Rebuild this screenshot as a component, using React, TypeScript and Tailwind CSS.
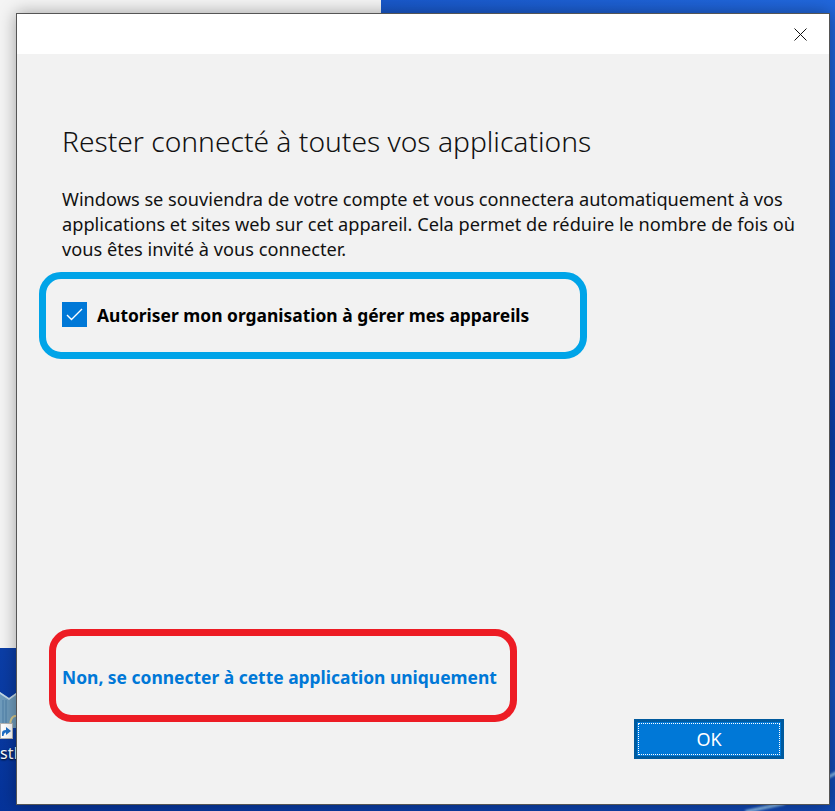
export default function App() {
  return (
    <div className="relative h-[811px] w-[835px] overflow-hidden bg-[linear-gradient(200deg,#2167dc_0%,#0b3ea8_40%,#1550bc_62%,#05339a_100%)] font-['Noto_Sans',sans-serif]">
      {/* window behind the dialog */}
      <div className="absolute left-0 top-0 h-[648px] w-[381px] bg-[#f4f4f4]" />

      {/* wallpaper streaks, bottom right */}
      <div className="absolute left-[822px] top-[772px] h-[3px] w-[26px] -rotate-[28deg] bg-[#8fc0ec] blur-[1px]" />
      <div className="absolute left-[745px] top-[806px] h-[3px] w-[40px] -rotate-[12deg] bg-[#8fc0ec] blur-[1px]" />

      {/* desktop icon, cut off by the dialog */}
      <svg className="absolute left-0 top-[690px]" width="16" height="50" viewBox="0 0 16 50">
        <path d="M0 2 L9 8 L16 3 V38 H0 Z" fill="#6f9cbd" />
        <path d="M0 2 L9 8 L16 3 V5 L9 10 L0 4 Z" fill="#c4d8e6" />
        <path d="M3 10 V38 M6 10 V38" stroke="#4f7ea6" strokeWidth="1" />
        <path d="M11 36 A5 7 0 0 1 16 26" fill="none" stroke="#d8c98a" strokeWidth="2" />
      </svg>
      <div className="absolute left-0 top-[723px] flex h-[16px] w-[13px] items-center justify-center border border-[#b5b5b5] bg-white">
        <svg width="11" height="11" viewBox="0 0 11 11">
          <path d="M1 10 L1 7 Q1 4 5 4 L5 1 L10 5 L5 9 L5 6.500 Q3 6.500 2.500 10 Z" fill="#1f6fc8" />
        </svg>
      </div>
      <div className="absolute left-0 top-[742px] text-[16px] leading-[22px] text-white [text-shadow:0_1px_2px_#000]">
        stF
      </div>

      {/* dialog */}
      <div className="absolute left-[16px] top-[13px] flex h-[792px] w-[814px] flex-col border border-[#555] bg-[#f2f2f2] shadow-[0_0_16px_rgba(0,0,0,0.35)]">
        <div className="flex h-[40px] shrink-0 items-center justify-end bg-white pr-[22px]">
          <svg width="13" height="13" viewBox="0 0 13 13" fill="none" stroke="#111" strokeWidth="1">
            <path d="M0.500 0.500 L12.500 12.500 M12.500 0.500 L0.500 12.500" />
          </svg>
        </div>

        <div className="flex grow flex-col pl-[45px]">
          <h1 className="mt-[67px] text-[28.2px] font-light leading-[40px] text-[#111]">
            Rester connecté à toutes vos applications
          </h1>
          <p className="mt-[26px] w-[745px] text-[18.2px] leading-[25px] text-[#111]">
            Windows se souviendra de votre compte et vous connectera automatiquement à vos applications et sites web sur
            cet appareil. Cela permet de réduire le nombre de fois où vous êtes invité à vous connecter.
          </p>

          <div className="-ml-[23px] mt-[10px] flex h-[87px] w-[548px] items-center gap-[10px] rounded-[22px] border-[7px] border-[#00a4e8] pb-[2px] pl-[16px]">
            <div className="flex h-[25px] w-[25px] items-center justify-center bg-[#0078d7]">
              <svg width="17" height="13" viewBox="0 0 17 13" fill="none" stroke="#fff" strokeWidth="1.400">
                <path d="M1 7 L5.500 11.500 L16 1" />
              </svg>
            </div>
            <span className="text-[17.43px] font-bold leading-[24px] text-black">
              Autoriser mon organisation à gérer mes appareils
            </span>
          </div>

          <div className="mt-[270px] flex items-start">
            <div className="-ml-[13px] flex h-[93px] w-[468px] items-center rounded-[22px] border-[7px] border-[#ed1c24] pl-[6px] pt-[2px]">
              <span className="text-[17.43px] font-bold leading-[24px] text-[#0078d7]">
                Non, se connecter à cette application uniquement
              </span>
            </div>
            <button className="ml-[117px] mt-[90px] flex h-[40px] w-[150px] items-center justify-center border-[3px] border-[#005a9e] bg-[#0078d7] p-[1px]">
              <span className="flex h-full w-full items-center justify-center border border-dotted border-white text-[18px] leading-none text-white">
                OK
              </span>
            </button>
          </div>
        </div>
      </div>
    </div>
  );
}
